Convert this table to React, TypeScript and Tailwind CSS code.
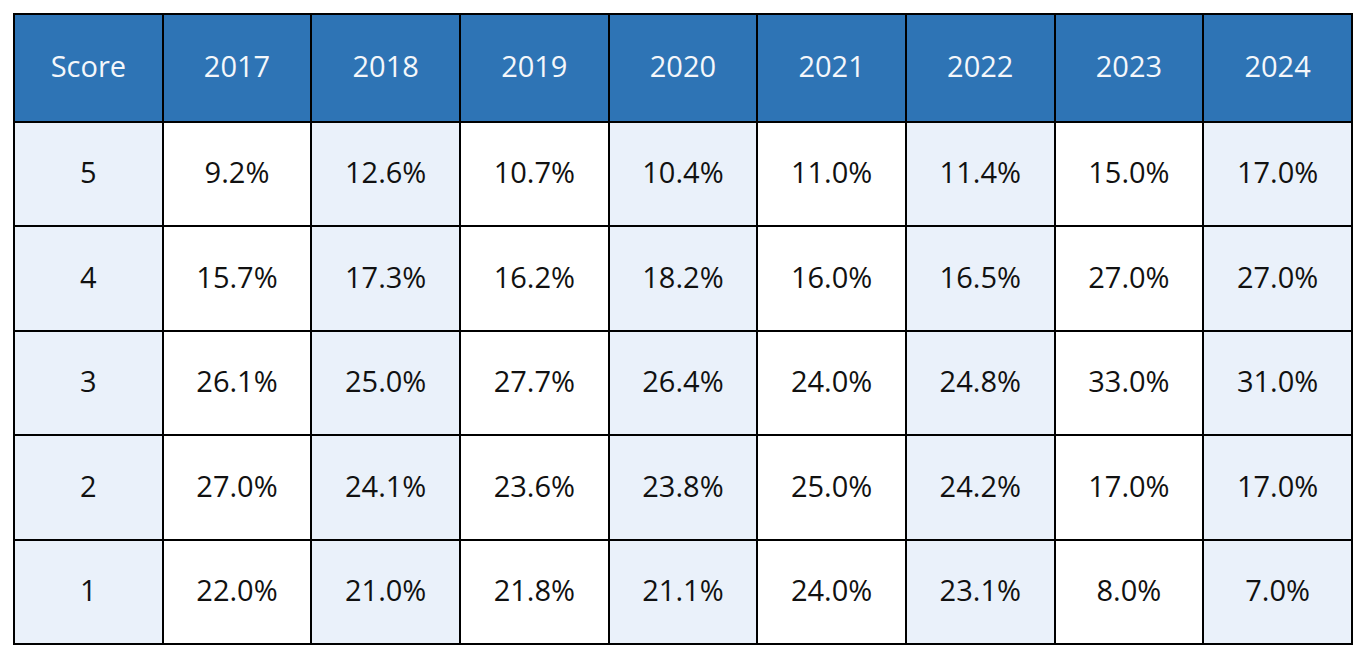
const years = ['2017', '2018', '2019', '2020', '2021', '2022', '2023', '2024'];

const rows: { score: string; values: string[] }[] = [
  { score: '5', values: ['9.2%', '12.6%', '10.7%', '10.4%', '11.0%', '11.4%', '15.0%', '17.0%'] },
  { score: '4', values: ['15.7%', '17.3%', '16.2%', '18.2%', '16.0%', '16.5%', '27.0%', '27.0%'] },
  { score: '3', values: ['26.1%', '25.0%', '27.7%', '26.4%', '24.0%', '24.8%', '33.0%', '31.0%'] },
  { score: '2', values: ['27.0%', '24.1%', '23.6%', '23.8%', '25.0%', '24.2%', '17.0%', '17.0%'] },
  { score: '1', values: ['22.0%', '21.0%', '21.8%', '21.1%', '24.0%', '23.1%', '8.0%', '7.0%'] },
];

const rowHeights = ['h-[104px]', 'h-[105px]', 'h-[104px]', 'h-[105px]', 'h-[104px]'];

export default function App() {
  return (
    <div className="w-[1366px] h-[660px] bg-white pt-[13px] pl-[13px] font-['Open_Sans','Noto_Sans',sans-serif]">
      <table className="w-[1340px] table-fixed border-collapse border-2 border-black text-[29px]">
        <thead>
          <tr className="h-[108px] bg-[#2e74b5] text-[#f4f7fb]">
            <th className="border-2 border-black pb-1 font-normal">Score</th>
            {years.map((y) => (
              <th key={y} className="border-2 border-black pb-1 font-normal">
                {y}
              </th>
            ))}
          </tr>
        </thead>
        <tbody className="text-[#111]">
          {rows.map((r, i) => (
            <tr key={r.score} className={rowHeights[i]}>
              <td className="border-2 border-black bg-[#eaf1fa] pb-1 text-center">{r.score}</td>
              {r.values.map((v, j) => (
                <td
                  key={j}
                  className={`border-2 border-black pb-1 text-center ${j % 2 === 1 ? 'bg-[#eaf1fa]' : 'bg-white'}`}
                >
                  {v}
                </td>
              ))}
            </tr>
          ))}
        </tbody>
      </table>
    </div>
  );
}
